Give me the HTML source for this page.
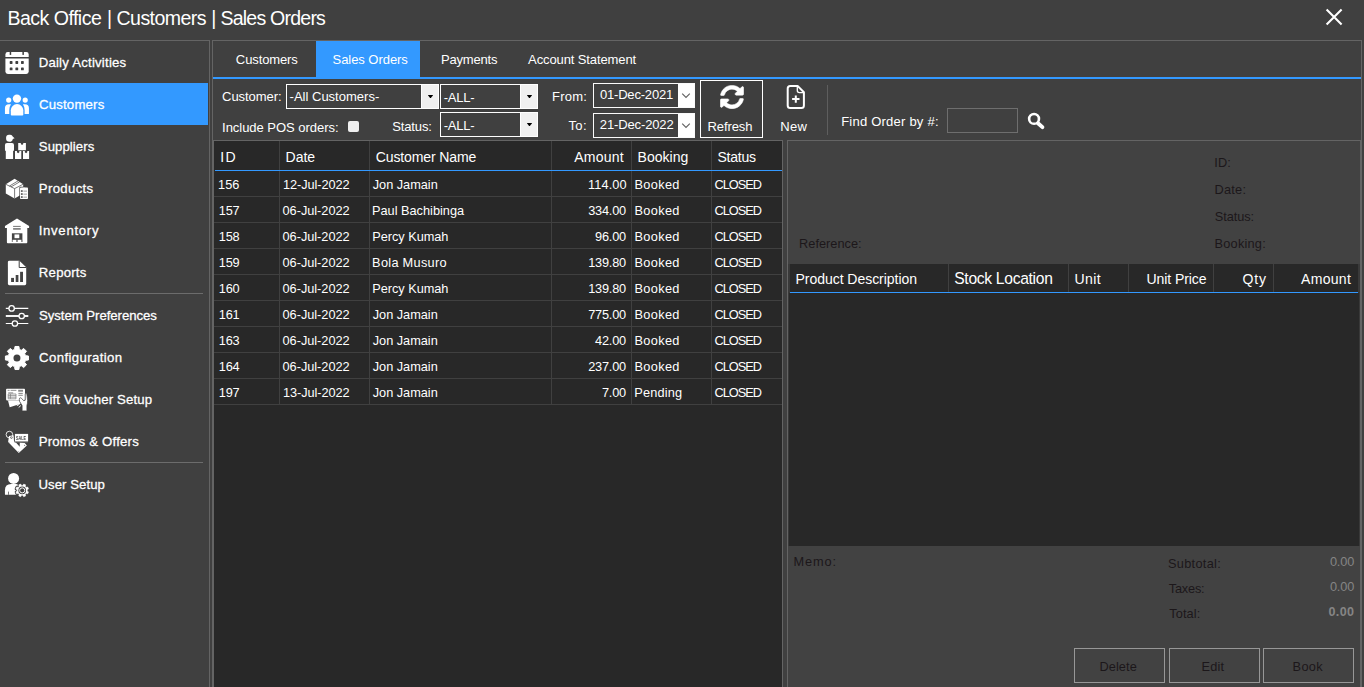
<!DOCTYPE html>
<html lang="en">
<head>
<meta charset="utf-8">
<title>Back Office | Customers | Sales Orders</title>
<style>
html,body{margin:0;padding:0;}
body{width:1364px;height:687px;overflow:hidden;background:#404040;position:relative;font-family:"Liberation Sans",sans-serif;color:#fff;}
.a{position:absolute;}
.t{position:absolute;white-space:nowrap;line-height:20px;height:20px;}
.ln{position:absolute;background:#646464;}
.dk{position:absolute;background:#282828;}
.bl{position:absolute;background:#3399ff;}
.cs{position:absolute;background:#404040;width:1px;}
.rs{position:absolute;background:#404040;height:1px;}
.cb{position:absolute;box-sizing:border-box;border:1px solid #fff;background:#404040;}
.cb i{position:absolute;top:0;bottom:0;right:0;width:16px;background:#f0f0f0;border-left:1px solid #fff;}
.cb i:after{content:"";position:absolute;left:5.6px;top:9.7px;width:5.8px;height:3.8px;background:#000;clip-path:polygon(0 0,100% 0,50% 100%);}
.dp{position:absolute;box-sizing:border-box;border:1px solid #fafafa;background:#404040;}
.dp i{position:absolute;top:0;bottom:0;right:0;width:16px;background:#fff;}
.btn{position:absolute;box-sizing:border-box;border:1px solid #979797;}
</style>
</head>
<body>
<!-- sidebar frame -->
<div class="ln" style="left:0;top:40px;width:210px;height:1px"></div>
<div class="ln" style="left:209px;top:40px;width:1px;height:647px"></div>
<div class="bl" style="left:0;top:83px;width:208px;height:42px"></div>
<div class="ln" style="left:5px;top:293px;width:198px;height:1px;background:#6c6c6c"></div>
<div class="ln" style="left:5px;top:462px;width:198px;height:1px;background:#6c6c6c"></div>
<!-- main frame -->
<div class="ln" style="left:212px;top:40px;width:1150px;height:1px"></div>
<div class="ln" style="left:212px;top:40px;width:1px;height:647px"></div>
<div class="ln" style="left:1361px;top:40px;width:1px;height:647px"></div>
<!-- tabs -->
<div class="bl" style="left:316px;top:41px;width:104px;height:36px"></div>
<div class="bl" style="left:213px;top:77px;width:1148px;height:2px"></div>
<!-- toolbar controls -->
<div class="cb" style="left:286px;top:84px;width:153px;height:25px"><i></i></div>
<div class="cb" style="left:440px;top:84px;width:98px;height:25px"><i></i></div>
<div class="cb" style="left:440px;top:112px;width:98px;height:25px"><i></i></div>
<div class="a" style="left:348px;top:121px;width:11px;height:11px;background:#f0f0f0;border-radius:2px"></div>
<div class="dp" style="left:593px;top:83px;width:102px;height:25px"><i></i>
<svg class="a" style="right:0;top:0" width="16" height="23" viewBox="0 0 16 23"><path d="M4.2 9.6 L8 13.4 L11.8 9.6" fill="none" stroke="#606060" stroke-width="1.1"/></svg></div>
<div class="dp" style="left:593px;top:113px;width:102px;height:25px"><i></i>
<svg class="a" style="right:0;top:0" width="16" height="23" viewBox="0 0 16 23"><path d="M4.2 9.6 L8 13.4 L11.8 9.6" fill="none" stroke="#606060" stroke-width="1.1"/></svg></div>
<div class="a" style="left:700px;top:80px;width:63px;height:58px;box-sizing:border-box;border:1px solid #fff;background:#3e3e3e"></div>
<div class="ln" style="left:827px;top:85px;width:1px;height:50px;background:#5e5e5e"></div>
<div class="a" style="left:947px;top:108px;width:71px;height:25px;box-sizing:border-box;border:1px solid #6e6e6e"></div>
<!-- left grid -->
<div class="ln" style="left:213px;top:140px;width:570px;height:547px"></div>
<div class="dk" style="left:214px;top:141px;width:568px;height:546px"></div>
<div class="cs" style="left:279px;top:141px;height:264px"></div>
<div class="cs" style="left:369px;top:141px;height:264px"></div>
<div class="cs" style="left:551px;top:141px;height:264px"></div>
<div class="cs" style="left:631px;top:141px;height:264px"></div>
<div class="cs" style="left:711px;top:141px;height:264px"></div>
<div class="rs" style="left:214px;top:196px;width:568px"></div>
<div class="rs" style="left:214px;top:222px;width:568px"></div>
<div class="rs" style="left:214px;top:248px;width:568px"></div>
<div class="rs" style="left:214px;top:274px;width:568px"></div>
<div class="rs" style="left:214px;top:300px;width:568px"></div>
<div class="rs" style="left:214px;top:326px;width:568px"></div>
<div class="rs" style="left:214px;top:352px;width:568px"></div>
<div class="rs" style="left:214px;top:378px;width:568px"></div>
<div class="rs" style="left:214px;top:404px;width:568px"></div>
<div class="bl" style="left:215px;top:170px;width:567px;height:1px"></div>
<!-- detail panel -->
<div class="ln" style="left:787px;top:140px;width:574px;height:547px"></div>
<div class="a" style="left:788px;top:141px;width:572px;height:546px;background:#424242"></div>
<div class="a" style="left:788px;top:264px;width:572px;height:282px;background:#393939"></div>
<div class="dk" style="left:790px;top:264px;width:568px;height:29px"></div>
<div class="dk" style="left:789px;top:293px;width:570px;height:253px"></div>
<div class="bl" style="left:790px;top:292px;width:568px;height:1px"></div>
<div class="cs" style="left:948px;top:264px;height:28px"></div>
<div class="cs" style="left:1068px;top:264px;height:28px"></div>
<div class="cs" style="left:1128px;top:264px;height:28px"></div>
<div class="cs" style="left:1213px;top:264px;height:28px"></div>
<div class="cs" style="left:1273px;top:264px;height:28px"></div>
<div class="btn" style="left:1074px;top:648px;width:91px;height:35px"></div>
<div class="btn" style="left:1169px;top:648px;width:91px;height:35px"></div>
<div class="btn" style="left:1263px;top:648px;width:91px;height:35px"></div>
<!-- close -->
<svg class="a" style="left:1322px;top:5px" width="24" height="24" viewBox="0 0 24 24"><path d="M4.6 4.6 L19.6 19.6 M19.6 4.6 L4.6 19.6" stroke="#fff" stroke-width="2.1" fill="none"/></svg>
<svg class="a" style="left:0;top:40px" width="210" height="480" viewBox="0 40 210 480">
<g fill="#fff"><path d="M5.4 57V54.4Q5.4 52 7.8 52H26.3Q28.7 52 28.7 54.4V57Z"/><path d="M5.4 58.6H28.7V71.6Q28.7 74 26.3 74H7.8Q5.4 74 5.4 71.6Z"/></g>
<g fill="#404040"><rect x="9.7" y="51" width="1.5" height="3.9"/><rect x="22.4" y="51" width="1.5" height="3.9"/>
<rect x="9.7" y="61.1" width="2.8" height="2.8" rx="0.6"/>
<rect x="15.4" y="61.1" width="2.8" height="2.8" rx="0.6"/>
<rect x="21.0" y="61.1" width="2.8" height="2.8" rx="0.6"/>
<rect x="9.7" y="67.5" width="2.8" height="2.8" rx="0.6"/>
<rect x="15.4" y="67.5" width="2.8" height="2.8" rx="0.6"/>
<rect x="21.0" y="67.5" width="2.8" height="2.8" rx="0.6"/>
</g>
<g fill="#fff"><circle cx="16.95" cy="98.6" r="4.2"/><circle cx="8.7" cy="100.1" r="2.6"/><circle cx="25.2" cy="100.1" r="2.6"/>
<path d="M10.8 114.5V110.2A6.25 6.1 0 0 1 23.3 110.2V114.5Q23.3 115.4 22.4 115.4H11.7Q10.8 115.4 10.8 114.5Z"/>
<path d="M4.95 113.4V108.2Q4.95 104.2 9 104.2H11Q9.3 106.6 9.3 110V114H5.55Q4.95 114 4.95 113.4Z"/>
<path d="M28.95 113.4V108.2Q28.95 104.2 24.9 104.2H22.9Q24.6 106.6 24.6 110V114H28.35Q28.95 114 28.95 113.4Z"/></g>
<g fill="#fff"><path d="M6.1 137.6Q6.1 134.7 9 134.7H10.2Q12.2 134.7 12.7 136.6L14.6 138.3L12.8 138.9Q12.5 141.7 9.45 141.7Q6.1 141.7 6.1 138.4Z"/>
<path d="M4.95 149.5V145Q4.95 142.9 7 142.9H12Q14 142.9 14 145V149.5Q14 151 13.1 151V158.9H5.8V151Q4.95 151 4.95 149.5Z"/>
<path d="M18.2 142.9H20.85V144.10L22.05 145.10L23.25 144.10V142.9H25.9V150.2H18.2Z"/>
<path d="M15 151H16.95V152.20L18.15 153.20L19.35 152.20V151H21.3V158.9H15Z"/>
<path d="M23 151H24.85V152.20L26.05 153.20L27.25 152.20V151H29.1V158.9H23Z"/>
</g>
<g><path fill="#fff" d="M14.6 178.8L23.2 184.2V193.6L14.6 198.4L5.8 193.6V184.3Z"/>
<path fill="none" stroke="#404040" stroke-width="0.7" d="M5.8 184.3L14.6 188.6L23.2 184.2M14.6 188.6V198.4M9.4 186.1L18 180.9M11 186.9L19.6 181.9"/>
<rect x="19.4" y="186.8" width="9.2" height="12.8" rx="1" fill="#404040"/><rect x="20" y="187.4" width="8" height="11.6" rx="0.8" fill="#fff"/>
<g fill="#5a5a5a"><rect x="22.6" y="186.9" width="2.8" height="1.2" rx="0.5" fill="#bbb"/>
<rect x="20.9" y="190.2" width="1.8" height="1.7"/><rect x="23.4" y="190.7" width="3.6" height="0.8" fill="#8a8a8a"/>
<rect x="20.9" y="193.2" width="1.8" height="1.7"/><rect x="23.4" y="193.7" width="3.6" height="0.8" fill="#8a8a8a"/>
<rect x="20.9" y="196.2" width="1.8" height="1.7"/><rect x="23.4" y="196.7" width="3.6" height="0.8" fill="#8a8a8a"/>
</g></g>
<g><path fill="#fff" d="M17 218.6L29.1 226V227.9H27.3V242.3Q27.3 243.2 26.4 243.2H7.8Q6.9 243.2 6.9 242.3V227.9H4.95V226Z"/>
<rect x="13.1" y="225.9" width="7.6" height="0.9" fill="#666"/><rect x="13.1" y="228.1" width="7.6" height="1.6" fill="#777"/>
<rect x="11.9" y="233.3" width="10.5" height="8.6" fill="#444"/><rect x="14.5" y="234.4" width="4.8" height="3.8" fill="#fff"/>
<rect x="13" y="239.8" width="3.3" height="2.2" fill="#fff"/><rect x="17.6" y="239.8" width="3.6" height="2.2" fill="#fff"/><rect x="11.9" y="239.8" width="1.1" height="2.2" fill="#999"/><rect x="21.2" y="239.8" width="1.2" height="2.2" fill="#999"/><rect x="16.3" y="239.8" width="1.3" height="2.2" fill="#999"/></g>
<g><path fill="#fff" d="M7.9 262.1Q7.9 260.7 9.3 260.7H19.4L26.2 267.2V283.8Q26.2 285.2 24.8 285.2H9.3Q7.9 285.2 7.9 283.8Z"/>
<path fill="none" stroke="#404040" stroke-width="1" d="M19.2 260.7V267.5H26.2"/>
<g fill="#444"><rect x="11.1" y="277.9" width="2.9" height="4.1"/><rect x="15.7" y="275" width="2.7" height="7"/><rect x="20.1" y="271.8" width="2.9" height="10.2"/></g></g>
<g stroke="#fff" fill="none"><path stroke-width="1.2" d="M5.8 308.4H28.3M5.8 323.5H28.3"/><path stroke-width="1.9" d="M5.8 316H28.3"/>
<g fill="#404040" stroke-width="1.3"><circle cx="11.65" cy="308.4" r="2.7"/><circle cx="21.7" cy="316" r="2.7"/><circle cx="14.9" cy="323.5" r="2.7"/></g></g>
<path fill="#fff" stroke="#fff" stroke-width="1" stroke-linejoin="round" d="M14.58 349.42 L14.97 346.47 L18.93 346.47 L19.32 349.42 L21.34 350.26 L23.70 348.45 L26.50 351.25 L24.69 353.61 L25.53 355.63 L28.48 356.02 L28.48 359.98 L25.53 360.37 L24.69 362.39 L26.50 364.75 L23.70 367.55 L21.34 365.74 L19.32 366.58 L18.93 369.53 L14.97 369.53 L14.58 366.58 L12.56 365.74 L10.20 367.55 L7.40 364.75 L9.21 362.39 L8.37 360.37 L5.42 359.98 L5.42 356.02 L8.37 355.63 L9.21 353.61 L7.40 351.25 L10.20 348.45 L12.56 350.26Z"/><circle cx="16.95" cy="358" r="3.5" fill="#404040"/>
<g><path fill="#fff" d="M8 400.6L19.5 400.6L20.8 403.8L9.7 407.2Z"/>
<rect x="6.1" y="388.8" width="18.9" height="11.6" rx="0.8" fill="#fff"/>
<g fill="#666"><rect x="7.6" y="389.9" width="2" height="0.7"/><rect x="10.6" y="389.9" width="5.8" height="0.7"/><rect x="18.2" y="389.8" width="4.8" height="1.9" fill="#888"/><rect x="18.4" y="392.9" width="4.4" height="0.8"/><rect x="18.4" y="394.8" width="4.4" height="0.8"/>
<rect x="8.2" y="392.3" width="5" height="1.2" fill="#999"/><path fill="none" stroke="#777" stroke-width="0.7" d="M8.2 394H16V398.8H8.2ZM8.2 395.6H16M8.2 397.2H16M10.4 394V398.8"/></g>
<path fill="#fff" stroke="#404040" stroke-width="0.7" d="M22.1 410.9V405.5L19.6 401.5Q19 399.6 19.6 398.2Q20.6 397.2 21.6 398.4L23.6 400.6L25.2 400.2V393.8Q25.9 392.8 26.8 393.8L27.6 400.5Q27.6 403.5 26.9 405.5V410.9Z"/>
<path fill="none" stroke="#fff" stroke-width="1" stroke-linecap="round" d="M17.2 405.4L19 404.6M19 407.2L20.6 405.8"/></g>
<g><circle cx="9.4" cy="434.55" r="3.3" fill="none" stroke="#fff" stroke-width="0.85"/>
<path fill="#fff" d="M9 436.1L13.6 435.2L14 441.1L16.4 443.1L19.7 446.8L19.8 442.6L24.7 443.1L26.9 445.5L18.8 453L8.1 442Z"/>
<circle cx="11.4" cy="437.6" r="1.15" fill="#404040"/><circle cx="11.4" cy="437.6" r="0.5" fill="#fff"/><circle cx="24.7" cy="445.2" r="0.5" fill="#404040"/><circle cx="18.8" cy="451.4" r="0.45" fill="#404040"/><circle cx="9" cy="442.1" r="0.4" fill="#404040"/>
<rect x="14.5" y="433.5" width="14" height="8.9" fill="#404040"/><rect x="14.9" y="433.9" width="13.2" height="7.6" fill="#fff"/><rect x="15.2" y="441.7" width="12.6" height="0.6" fill="#999"/>
<g style="filter:grayscale(1)"><text x="21.1" y="440" font-family="Liberation Sans, sans-serif" font-size="5.4" font-weight="700" fill="#3a3a3a" text-anchor="middle" textLength="10" lengthAdjust="spacingAndGlyphs">SALE</text></g></g>
<g><circle cx="13.6" cy="478.4" r="5.5" fill="#fff"/><path fill="#fff" d="M4.95 494.2V490.2Q4.95 483.9 11.2 483.9H16Q19 483.9 20 485.5L18 494.8H5.55Q4.95 494.8 4.95 494.2Z"/>
<path d="M22.76 485.43 L23.70 484.08 L25.61 484.87 L25.32 486.49 L26.11 487.28 L27.73 486.99 L28.52 488.90 L27.17 489.84 L27.17 490.96 L28.52 491.90 L27.73 493.81 L26.11 493.52 L25.32 494.31 L25.61 495.93 L23.70 496.72 L22.76 495.37 L21.64 495.37 L20.70 496.72 L18.79 495.93 L19.08 494.31 L18.29 493.52 L16.67 493.81 L15.88 491.90 L17.23 490.96 L17.23 489.84 L15.88 488.90 L16.67 486.99 L18.29 487.28 L19.08 486.49 L18.79 484.87 L20.70 484.08 L21.64 485.43Z" fill="#fff" stroke="#404040" stroke-width="2.4" stroke-linejoin="round"/><path d="M22.76 485.43 L23.70 484.08 L25.61 484.87 L25.32 486.49 L26.11 487.28 L27.73 486.99 L28.52 488.90 L27.17 489.84 L27.17 490.96 L28.52 491.90 L27.73 493.81 L26.11 493.52 L25.32 494.31 L25.61 495.93 L23.70 496.72 L22.76 495.37 L21.64 495.37 L20.70 496.72 L18.79 495.93 L19.08 494.31 L18.29 493.52 L16.67 493.81 L15.88 491.90 L17.23 490.96 L17.23 489.84 L15.88 488.90 L16.67 486.99 L18.29 487.28 L19.08 486.49 L18.79 484.87 L20.70 484.08 L21.64 485.43Z" fill="#fff" stroke="#fff" stroke-width="0.5" stroke-linejoin="round"/>
<circle cx="22.2" cy="490.4" r="3.8" fill="#404040"/><circle cx="22.2" cy="490.4" r="2.55" fill="none" stroke="#fff" stroke-width="1.0"/>
<rect x="8.2" y="491.6" width="0.7" height="3.2" fill="#404040"/></g>
</svg>
<svg class="a" style="left:720px;top:85px" width="24" height="24" viewBox="0 0 512 512"><path fill="#fff" stroke="#fff" stroke-width="12" d="M370.72 133.28C339.458 104.008 298.888 87.962 255.848 88c-77.458.068-144.328 53.178-162.791 126.85-1.344 5.363-6.122 9.15-11.651 9.15H24.103c-7.498 0-13.194-6.807-11.807-14.176C33.933 94.924 134.813 8 256 8c66.448 0 126.791 26.136 171.315 68.685L463.03 40.97C478.149 25.851 504 36.559 504 57.941V192c0 13.255-10.745 24-24 24H345.941c-21.382 0-32.09-25.851-16.971-40.971l41.75-41.749zM32 296h134.059c21.382 0 32.09 25.851 16.971 40.971l-41.75 41.75c31.262 29.273 71.835 45.319 114.876 45.28 77.418-.07 144.315-53.144 162.787-126.849 1.344-5.363 6.122-9.15 11.651-9.15h57.304c7.498 0 13.194 6.807 11.807 14.176C478.067 417.076 377.187 504 256 504c-66.448 0-126.791-26.136-171.315-68.685L48.970 471.030C33.851 486.149 8 475.441 8 454.059V320c0-13.255 10.745-24 24-24z"/></svg>
<svg class="a" style="left:784px;top:83px" width="24" height="28" viewBox="784 83 24 28"><path fill="none" stroke="#fff" stroke-width="2" stroke-linejoin="round" d="M790.2 85.9H797.6L803.9 92.2V105.6Q803.9 108.1 801.4 108.1H790.2Q787.7 108.1 787.7 105.6V88.4Q787.7 85.9 790.2 85.9Z"/><path fill="none" stroke="#fff" stroke-width="1.3" d="M797.3 86V90.6Q797.3 92.6 799.3 92.6H803.8"/><path fill="none" stroke="#fff" stroke-width="2" d="M795.8 95.4V102.8M792.1 99.1H799.5"/></svg>
<svg class="a" style="left:1024px;top:109px" width="24" height="24" viewBox="1024 109 24 24"><circle cx="1034.05" cy="118.9" r="4.9" fill="none" stroke="#fff" stroke-width="2.6"/><path d="M1038 123.2L1042.4 127.1" stroke="#fff" stroke-width="3.9" stroke-linecap="round" fill="none"/></svg>
<div class="t" style="left:7.48px;top:8.00px;font-size:19.57px;letter-spacing:-0.536px">Back Office</div>
<div class="t" style="left:107.03px;top:8.00px;font-size:19.57px;letter-spacing:0.000px">|</div>
<div class="t" style="left:116.53px;top:8.00px;font-size:19.57px;letter-spacing:-0.567px">Customers</div>
<div class="t" style="left:211.31px;top:8.00px;font-size:19.57px;letter-spacing:0.000px">|</div>
<div class="t" style="left:220.49px;top:8.00px;font-size:19.57px;letter-spacing:-0.796px">Sales Orders</div>
<div class="t" style="left:38.69px;top:53.00px;font-size:13.19px;letter-spacing:0.214px;-webkit-text-stroke:0.27px #ffffff">Daily Activities</div>
<div class="t" style="left:39.02px;top:95.00px;font-size:13.19px;letter-spacing:0.183px;-webkit-text-stroke:0.27px #ffffff">Customers</div>
<div class="t" style="left:38.86px;top:137.00px;font-size:13.19px;letter-spacing:0.048px;-webkit-text-stroke:0.27px #ffffff">Suppliers</div>
<div class="t" style="left:38.83px;top:179.00px;font-size:13.19px;letter-spacing:0.322px;-webkit-text-stroke:0.27px #ffffff">Products</div>
<div class="t" style="left:38.65px;top:221.00px;font-size:13.19px;letter-spacing:0.706px;-webkit-text-stroke:0.27px #ffffff">Inventory</div>
<div class="t" style="left:38.83px;top:262.60px;font-size:13.19px;letter-spacing:0.221px;-webkit-text-stroke:0.27px #ffffff">Reports</div>
<div class="t" style="left:38.97px;top:306.00px;font-size:13.19px;letter-spacing:-0.045px;-webkit-text-stroke:0.27px #ffffff">System Preferences</div>
<div class="t" style="left:39.05px;top:348.00px;font-size:13.19px;letter-spacing:0.383px;-webkit-text-stroke:0.27px #ffffff">Configuration</div>
<div class="t" style="left:39.09px;top:390.00px;font-size:13.19px;letter-spacing:0.135px;-webkit-text-stroke:0.27px #ffffff">Gift Voucher Setup</div>
<div class="t" style="left:38.64px;top:432.00px;font-size:13.19px;letter-spacing:0.206px;-webkit-text-stroke:0.27px #ffffff">Promos &amp; Offers</div>
<div class="t" style="left:38.50px;top:475.00px;font-size:13.19px;letter-spacing:0.041px;-webkit-text-stroke:0.27px #ffffff">User Setup</div>
<div class="t" style="left:235.86px;top:49.80px;font-size:13.04px;letter-spacing:-0.129px">Customers</div>
<div class="t" style="left:332.54px;top:49.80px;font-size:13.04px;letter-spacing:-0.065px">Sales Orders</div>
<div class="t" style="left:441.03px;top:49.80px;font-size:13.04px;letter-spacing:-0.215px">Payments</div>
<div class="t" style="left:528.08px;top:49.80px;font-size:13.04px;letter-spacing:-0.128px">Account Statement</div>
<div class="t" style="left:222.06px;top:87.00px;font-size:13.04px;letter-spacing:-0.069px">Customer:</div>
<div class="t" style="left:289.58px;top:87.00px;font-size:13.04px;letter-spacing:-0.009px">-All Customers-</div>
<div class="t" style="left:443.69px;top:88.00px;font-size:13.04px;letter-spacing:-0.253px">-ALL-</div>
<div class="t" style="left:222.06px;top:117.60px;font-size:13.04px;letter-spacing:-0.040px">Include POS orders:</div>
<div class="t" style="left:392.22px;top:116.70px;font-size:13.04px;letter-spacing:-0.141px">Status:</div>
<div class="t" style="left:443.69px;top:116.20px;font-size:13.04px;letter-spacing:-0.253px">-ALL-</div>
<div class="t" style="left:552.06px;top:86.70px;font-size:13.04px;letter-spacing:0.222px">From:</div>
<div class="t" style="left:568.47px;top:115.80px;font-size:13.04px;letter-spacing:0.391px">To:</div>
<div class="t" style="left:599.88px;top:85.00px;font-size:13.04px;letter-spacing:-0.194px">01-Dec-2021</div>
<div class="t" style="left:599.85px;top:114.50px;font-size:13.04px;letter-spacing:-0.146px">21-Dec-2022</div>
<div class="t" style="left:707.50px;top:116.60px;font-size:13.04px;letter-spacing:-0.109px">Refresh</div>
<div class="t" style="left:780.23px;top:116.60px;font-size:13.04px;letter-spacing:0.333px">New</div>
<div class="t" style="left:841.20px;top:111.80px;font-size:13.04px;letter-spacing:0.211px">Find Order by #:</div>
<div class="t" style="left:220.26px;top:147.00px;font-size:14.06px;letter-spacing:1.306px">ID</div>
<div class="t" style="left:285.54px;top:147.00px;font-size:14.06px;letter-spacing:-0.028px">Date</div>
<div class="t" style="left:375.76px;top:147.00px;font-size:14.06px;letter-spacing:-0.140px">Customer Name</div>
<div class="t" style="left:574.22px;top:147.00px;font-size:14.06px;letter-spacing:0.182px">Amount</div>
<div class="t" style="left:637.50px;top:147.00px;font-size:14.06px;letter-spacing:0.008px">Booking</div>
<div class="t" style="left:717.49px;top:147.00px;font-size:14.06px;letter-spacing:-0.238px">Status</div>
<div class="t" style="left:218.03px;top:174.70px;font-size:12.75px;letter-spacing:0.079px">156</div>
<div class="t" style="left:282.93px;top:174.70px;font-size:12.75px;letter-spacing:-0.072px">12-Jul-2022</div>
<div class="t" style="left:372.76px;top:174.70px;font-size:12.75px;letter-spacing:-0.024px">Jon Jamain</div>
<div class="t" style="left:588.10px;top:174.70px;font-size:12.75px;letter-spacing:0.090px">114.00</div>
<div class="t" style="left:634.52px;top:174.70px;font-size:12.75px;letter-spacing:0.336px">Booked</div>
<div class="t" style="left:714.61px;top:174.70px;font-size:12.75px;letter-spacing:-1.036px">CLOSED</div>
<div class="t" style="left:218.80px;top:200.70px;font-size:12.75px;letter-spacing:-0.232px">157</div>
<div class="t" style="left:282.54px;top:200.70px;font-size:12.75px;letter-spacing:-0.025px">06-Jul-2022</div>
<div class="t" style="left:371.94px;top:200.70px;font-size:12.75px;letter-spacing:0.001px">Paul Bachibinga</div>
<div class="t" style="left:588.25px;top:200.70px;font-size:12.75px;letter-spacing:-0.232px">334.00</div>
<div class="t" style="left:634.52px;top:200.70px;font-size:12.75px;letter-spacing:0.336px">Booked</div>
<div class="t" style="left:714.61px;top:200.70px;font-size:12.75px;letter-spacing:-1.036px">CLOSED</div>
<div class="t" style="left:218.80px;top:226.70px;font-size:12.75px;letter-spacing:-0.232px">158</div>
<div class="t" style="left:282.54px;top:226.70px;font-size:12.75px;letter-spacing:-0.025px">06-Jul-2022</div>
<div class="t" style="left:372.30px;top:226.70px;font-size:12.75px;letter-spacing:-0.039px">Percy Kumah</div>
<div class="t" style="left:595.11px;top:226.70px;font-size:12.75px;letter-spacing:-0.232px">96.00</div>
<div class="t" style="left:634.52px;top:226.70px;font-size:12.75px;letter-spacing:0.336px">Booked</div>
<div class="t" style="left:714.61px;top:226.70px;font-size:12.75px;letter-spacing:-1.036px">CLOSED</div>
<div class="t" style="left:218.80px;top:252.70px;font-size:12.75px;letter-spacing:-0.232px">159</div>
<div class="t" style="left:282.54px;top:252.70px;font-size:12.75px;letter-spacing:-0.025px">06-Jul-2022</div>
<div class="t" style="left:372.10px;top:252.70px;font-size:12.75px;letter-spacing:0.292px">Bola Musuro</div>
<div class="t" style="left:588.25px;top:252.70px;font-size:12.75px;letter-spacing:-0.232px">139.80</div>
<div class="t" style="left:634.52px;top:252.70px;font-size:12.75px;letter-spacing:0.336px">Booked</div>
<div class="t" style="left:714.61px;top:252.70px;font-size:12.75px;letter-spacing:-1.036px">CLOSED</div>
<div class="t" style="left:218.80px;top:278.70px;font-size:12.75px;letter-spacing:-0.232px">160</div>
<div class="t" style="left:282.54px;top:278.70px;font-size:12.75px;letter-spacing:-0.025px">06-Jul-2022</div>
<div class="t" style="left:372.30px;top:278.70px;font-size:12.75px;letter-spacing:-0.039px">Percy Kumah</div>
<div class="t" style="left:588.25px;top:278.70px;font-size:12.75px;letter-spacing:-0.232px">139.80</div>
<div class="t" style="left:634.52px;top:278.70px;font-size:12.75px;letter-spacing:0.336px">Booked</div>
<div class="t" style="left:714.61px;top:278.70px;font-size:12.75px;letter-spacing:-1.036px">CLOSED</div>
<div class="t" style="left:218.80px;top:304.70px;font-size:12.75px;letter-spacing:-0.232px">161</div>
<div class="t" style="left:282.54px;top:304.70px;font-size:12.75px;letter-spacing:-0.025px">06-Jul-2022</div>
<div class="t" style="left:372.76px;top:304.70px;font-size:12.75px;letter-spacing:-0.024px">Jon Jamain</div>
<div class="t" style="left:588.25px;top:304.70px;font-size:12.75px;letter-spacing:-0.232px">775.00</div>
<div class="t" style="left:634.52px;top:304.70px;font-size:12.75px;letter-spacing:0.336px">Booked</div>
<div class="t" style="left:714.61px;top:304.70px;font-size:12.75px;letter-spacing:-1.036px">CLOSED</div>
<div class="t" style="left:218.80px;top:330.70px;font-size:12.75px;letter-spacing:-0.232px">163</div>
<div class="t" style="left:282.54px;top:330.70px;font-size:12.75px;letter-spacing:-0.025px">06-Jul-2022</div>
<div class="t" style="left:372.76px;top:330.70px;font-size:12.75px;letter-spacing:-0.024px">Jon Jamain</div>
<div class="t" style="left:595.11px;top:330.70px;font-size:12.75px;letter-spacing:-0.232px">42.00</div>
<div class="t" style="left:634.52px;top:330.70px;font-size:12.75px;letter-spacing:0.336px">Booked</div>
<div class="t" style="left:714.61px;top:330.70px;font-size:12.75px;letter-spacing:-1.036px">CLOSED</div>
<div class="t" style="left:218.80px;top:356.70px;font-size:12.75px;letter-spacing:-0.232px">164</div>
<div class="t" style="left:282.54px;top:356.70px;font-size:12.75px;letter-spacing:-0.025px">06-Jul-2022</div>
<div class="t" style="left:372.76px;top:356.70px;font-size:12.75px;letter-spacing:-0.024px">Jon Jamain</div>
<div class="t" style="left:588.25px;top:356.70px;font-size:12.75px;letter-spacing:-0.232px">237.00</div>
<div class="t" style="left:634.52px;top:356.70px;font-size:12.75px;letter-spacing:0.336px">Booked</div>
<div class="t" style="left:714.61px;top:356.70px;font-size:12.75px;letter-spacing:-1.036px">CLOSED</div>
<div class="t" style="left:218.80px;top:382.70px;font-size:12.75px;letter-spacing:-0.232px">197</div>
<div class="t" style="left:282.93px;top:382.70px;font-size:12.75px;letter-spacing:-0.072px">13-Jul-2022</div>
<div class="t" style="left:372.76px;top:382.70px;font-size:12.75px;letter-spacing:-0.024px">Jon Jamain</div>
<div class="t" style="left:601.97px;top:382.70px;font-size:12.75px;letter-spacing:-0.232px">7.00</div>
<div class="t" style="left:634.37px;top:382.70px;font-size:12.75px;letter-spacing:0.149px">Pending</div>
<div class="t" style="left:714.61px;top:382.70px;font-size:12.75px;letter-spacing:-1.036px">CLOSED</div>
<div class="t" style="left:1214.30px;top:153.00px;font-size:12.75px;letter-spacing:0.144px;color:#1c171a">ID:</div>
<div class="t" style="left:1214.62px;top:179.80px;font-size:12.75px;letter-spacing:0.210px;color:#1c171a">Date:</div>
<div class="t" style="left:1214.74px;top:206.80px;font-size:12.75px;letter-spacing:-0.066px;color:#1c171a">Status:</div>
<div class="t" style="left:1214.58px;top:233.80px;font-size:12.75px;letter-spacing:0.215px;color:#1c171a">Booking:</div>
<div class="t" style="left:799.08px;top:233.80px;font-size:12.75px;letter-spacing:0.019px;color:#1c171a">Reference:</div>
<div class="t" style="left:795.50px;top:268.80px;font-size:14.06px;letter-spacing:-0.059px">Product Description</div>
<div class="t" style="left:954.24px;top:268.90px;font-size:15.65px;letter-spacing:-0.307px">Stock Location</div>
<div class="t" style="left:1074.50px;top:269.00px;font-size:14.06px;letter-spacing:0.408px">Unit</div>
<div class="t" style="left:1146.47px;top:269.00px;font-size:14.06px;letter-spacing:-0.085px">Unit Price</div>
<div class="t" style="left:1242.57px;top:269.00px;font-size:14.06px;letter-spacing:0.745px">Qty</div>
<div class="t" style="left:1300.98px;top:269.00px;font-size:14.06px;letter-spacing:0.300px">Amount</div>
<div class="t" style="left:793.38px;top:552.00px;font-size:12.75px;letter-spacing:0.923px;color:#1c171a">Memo:</div>
<div class="t" style="left:1168.01px;top:553.80px;font-size:12.75px;letter-spacing:0.298px;color:#1c171a">Subtotal:</div>
<div class="t" style="left:1168.77px;top:578.80px;font-size:12.75px;letter-spacing:-0.193px;color:#1c171a">Taxes:</div>
<div class="t" style="left:1169.22px;top:603.60px;font-size:12.75px;letter-spacing:0.131px;color:#1c171a">Total:</div>
<div class="t" style="left:1329.96px;top:552.00px;font-size:12.75px;letter-spacing:-0.172px;color:#858585">0.00</div>
<div class="t" style="left:1329.96px;top:577.00px;font-size:12.75px;letter-spacing:-0.172px;color:#858585">0.00</div>
<div class="t" style="left:1328.56px;top:601.80px;font-size:12.57px;letter-spacing:0.319px;font-weight:700;color:#858585">0.00</div>
<div class="t" style="left:1099.46px;top:657.00px;font-size:12.75px;letter-spacing:0.091px;color:#1c171a">Delete</div>
<div class="t" style="left:1201.49px;top:657.00px;font-size:12.75px;letter-spacing:0.178px;color:#1c171a">Edit</div>
<div class="t" style="left:1292.62px;top:657.00px;font-size:12.75px;letter-spacing:0.295px;color:#1c171a">Book</div>
</body>
</html>
